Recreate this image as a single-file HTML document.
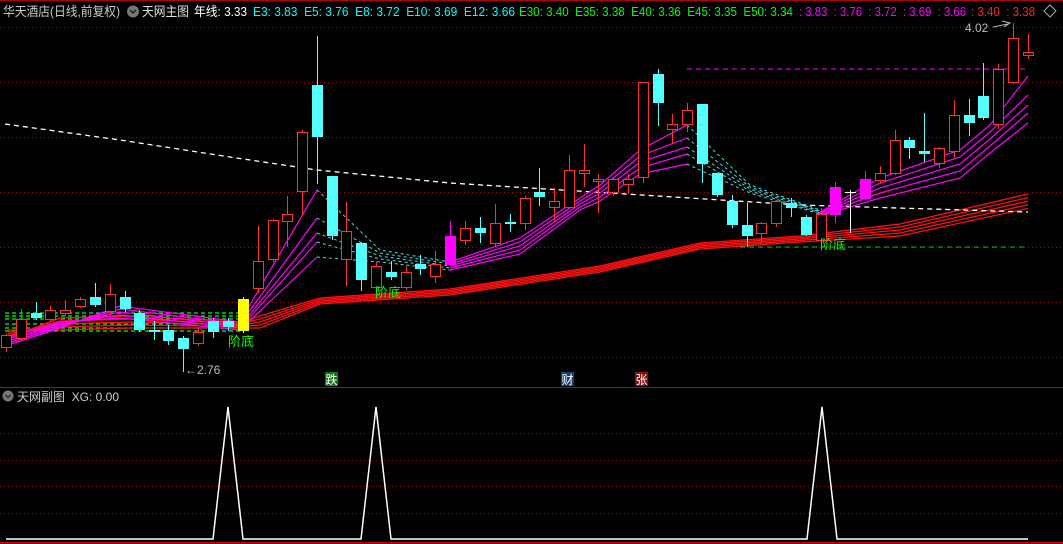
<!DOCTYPE html>
<html><head><meta charset="utf-8"><style>
html,body{margin:0;padding:0;background:#000;width:1063px;height:544px;overflow:hidden}
svg{display:block}
text{font-family:"Liberation Sans","Noto Sans CJK SC",sans-serif}
</style></head><body>
<svg id="s" width="1063" height="544" xmlns="http://www.w3.org/2000/svg">
<rect width="1063" height="544" fill="#000"/>
<g id="grid" stroke="#8a1010" stroke-width="1" stroke-dasharray="1,3"></g>
<line x1="0" y1="0.5" x2="1063" y2="0.5" stroke="#a00" />
<line x1="0" y1="387.5" x2="1063" y2="387.5" stroke="#c00" />
<line x1="0" y1="542.5" x2="1063" y2="542.5" stroke="#c00" />
<g id="lines"></g>
<g id="candles"></g>
<!-- header -->
<text x="3" y="16" font-size="13" fill="#c8c8c8" textLength="117" lengthAdjust="spacingAndGlyphs">华天酒店(日线,前复权)</text>
<circle cx="133" cy="11.5" r="6" fill="#777"/>
<path d="M130 10 L133 13 L136 10" stroke="#222" stroke-width="1.5" fill="none"/>
<text x="142" y="16" font-size="13" fill="#e0e0e0" textLength="47" lengthAdjust="spacingAndGlyphs">天网主图</text>
<text x="194" y="16" font-size="13" fill="#fff" textLength="53" lengthAdjust="spacingAndGlyphs">年线: 3.33</text>
<text x="253" y="16" font-size="12.5" fill="#00ffff" textLength="262" lengthAdjust="spacingAndGlyphs" xml:space="preserve">E3: 3.83  E5: 3.76  E8: 3.72  E10: 3.69  E12: 3.66</text>
<text x="519" y="16" font-size="12.5" fill="#00ff00" textLength="274" lengthAdjust="spacingAndGlyphs" xml:space="preserve">E30: 3.40  E35: 3.38  E40: 3.36  E45: 3.35  E50: 3.34</text>
<text x="799" y="16" font-size="12.5" fill="#ff00ff" textLength="167" lengthAdjust="spacingAndGlyphs" xml:space="preserve">: 3.83  : 3.76  : 3.72  : 3.69  : 3.66</text>
<text x="971" y="16" font-size="12.5" fill="#ff2020" textLength="64" lengthAdjust="spacingAndGlyphs" xml:space="preserve">: 3.40  : 3.38</text>
<path d="M1050 5 L1056 11 L1050 17 L1044 11 Z" stroke="#aaa" fill="none"/>
<!-- labels -->
<text x="228" y="346" font-size="13" fill="#00ff00">阶底</text>
<text x="375" y="297" font-size="13" fill="#00ff00">阶底</text>
<text x="820" y="249" font-size="13" fill="#00ff00">阶底</text>
<text x="185" y="374" font-size="12" fill="#bbb">←2.76</text>
<text x="965" y="32" font-size="12" fill="#bbb">4.02</text>
<path d="M993 27 L1008 24 M1002 21 L1010 23 L1004 27" stroke="#bbb" fill="none"/>
<rect x="325" y="372" width="13" height="14" fill="#087a10"/>
<text x="325.5" y="384" font-size="12" fill="#fff">跌</text>
<rect x="561" y="372" width="13" height="14" fill="#14407a"/>
<text x="561.5" y="384" font-size="12" fill="#fff">财</text>
<rect x="635" y="372" width="13" height="14" fill="#8a1010"/>
<text x="635.5" y="384" font-size="12" fill="#fff">张</text>
<!-- sub chart -->
<circle cx="8" cy="396" r="5.5" fill="#777"/>
<path d="M5.5 395 L8 397.5 L10.5 395" stroke="#222" stroke-width="1.3" fill="none"/>
<text x="17" y="401" font-size="12" fill="#ccc" xml:space="preserve">天网副图  XG: 0.00</text>
<polyline fill="none" stroke="#fff" stroke-width="1.5" points="6,539 213,539 228,407 243,539 361,539 376,407 391,539 807,539 822,407 837,539 1028,539"/>
</svg>
<script>
var NS="http://www.w3.org/2000/svg";
function el(p,t,a){var e=document.createElementNS(NS,t);for(var k in a)e.setAttribute(k,a[k]);p.appendChild(e);return e;}
var g=document.getElementById('grid');
[27,82,137,192,247,302,357,433,460,486,513].forEach(function(y){el(g,'line',{x1:0,y1:y+.5,x2:1063,y2:y+.5});});
var L=document.getElementById('lines');
function pl(pts,c,w,d){var a={points:pts.map(function(p){return p.join(',')}).join(' '),fill:'none',stroke:c,'stroke-width':w||1};if(d)a['stroke-dasharray']=d;el(L,'polyline',a);}
[313,316,319,324,328,331].forEach(function(y){pl([[5,y],[240,y]],'#00ff00',1.2,'4,3');});
for(var k=0;k<5;k++){var o=k*3;
pl([[8,338-k*2],[60,318+o],[130,316+o],[240,322+o/2],[260,316+o],[320,298+o/2],[450,289+o/2],[600,266+o/2],[700,243+o/2],[800,236+o/2],[900,224+o],[1028,194+o*1.2]],'#ff1010',1.3);}
pl([[5,124],[120,140],[230,157],[317,170],[450,183],[610,193],[800,205],[1028,212]],'#fff',1.3,'5,4');
pl([[687,69],[1028,69]],'#ff00ff',1,'5,4');
pl([[740,247],[1028,247]],'#00cc00',1,'5,4');
var tops=[[190,218,233,242,257],[125,138,147,154,164],[76,95,105,113,123]];
for(var k=0;k<5;k++){
 pl([[5,346-k*2],[60,328-k*1.5],[120,306+k*3],[240,322+k*2],[317,tops[0][k]]],'#ff00ff',1.2);
 pl([[317,tops[0][k]],[380,250+k*3],[450,262+k*2]],'#40e0e0',1,'3,3');
 pl([[450,262+k*2],[520,238+k*4],[580,198+k*3],[600,185+k*4],[640,150+k*6],[687,tops[1][k]]],'#ff00ff',1.2);
 pl([[687,tops[1][k]],[750,185+k*2],[820,210+k]],'#40e0e0',1,'3,3');
 pl([[820,212+k],[880,178+k*5],[960,150+k*7],[990,125+k*7],[1028,tops[2][k]]],'#ff00ff',1.2);
}
var C=[[6,333,335,347,352,'r'],[21,309,319,338,340,'r'],[36,302,313,318,320,'c'],[50,306,310,319,322,'r'],[65,300,310,313,316,'r'],[80,297,299,306,308,'r'],[95,283,297,305,307,'c'],[110,284,294,311,315,'r'],[125,291,297,309,312,'c'],[139,310,313,330,332,'c'],[154,321,330,332,340,'c'],[168,325,330,341,345,'c'],[183,336,338,349,372,'c'],[198,327,332,343,346,'r'],[213,318,321,332,338,'c'],[228,318,321,327,331,'c'],[243,297,299,331,333,'y'],
[258,226,261,288,293,'r'],[273,219,220,259,262,'r'],[287,196,214,221,247,'r'],[302,130,132,191,215,'r'],[317,36,85,137,184,'c'],[332,176,176,236,240,'c'],[346,202,231,259,286,'r'],[361,242,243,280,291,'c'],[376,262,266,287,292,'r'],[391,261,272,277,280,'c'],[406,265,272,287,290,'r'],[420,255,264,269,275,'c'],[435,251,264,276,283,'r'],[450,221,236,265,266,'m'],[465,221,228,240,245,'r'],[480,217,228,233,243,'c'],[495,204,223,243,246,'r'],[510,214,222,224,232,'c'],[525,196,198,223,230,'r'],[539,168,192,197,206,'c'],[554,188,201,207,222,'r'],[569,155,170,207,209,'r'],[584,144,170,173,187,'r'],[598,174,179,181,213,'r'],[613,177,179,192,196,'r'],[628,174,179,184,194,'r'],[643,82,82,177,183,'r'],[658,69,74,103,126,'c'],[672,114,124,129,143,'r'],[687,103,110,124,132,'r'],[702,104,104,164,183,'c'],[717,173,173,195,197,'c'],[732,195,201,225,228,'c'],[747,203,225,236,247,'c'],[761,222,223,233,243,'r'],[776,200,201,223,227,'r'],[791,198,203,208,217,'c'],[806,215,217,235,236,'c'],[821,208,214,240,242,'r'],[835,182,187,215,223,'m'],[850,190,192,193,233,'w'],[865,171,179,199,200,'m'],[880,166,173,180,184,'r'],[895,130,140,173,175,'r'],[909,137,140,148,159,'c'],[924,113,151,154,162,'c'],[939,147,148,163,168,'r'],[954,100,115,151,157,'r'],[969,99,115,123,136,'c'],[983,63,96,118,120,'c'],[998,64,69,124,129,'r'],[1013,23,38,82,84,'r'],[1028,34,52,55,59,'r']];
var G=document.getElementById('candles');
var col={r:'#ff3030',c:'#54ffff',m:'#ff00ff',y:'#ffff00',w:'#ffffff'};
C.forEach(function(d){var x=d[0],c=col[d[5]];
 if(d[5]=='w'){el(G,'line',{x1:x+.5,y1:d[1],x2:x+.5,y2:d[4],stroke:c});el(G,'line',{x1:x-5,y1:d[2]+.5,x2:x+6,y2:d[2]+.5,stroke:c});return;}
 el(G,'line',{x1:x+.5,y1:d[1],x2:x+.5,y2:d[2],stroke:c});
 el(G,'line',{x1:x+.5,y1:d[3],x2:x+.5,y2:d[4],stroke:c});
 var h=Math.max(d[3]-d[2],1);
 if(d[5]=='r') el(G,'rect',{x:x-4.5,y:d[2]+.5,width:10,height:h,fill:'#000',stroke:c});
 else el(G,'rect',{x:x-5,y:d[2],width:11,height:Math.max(h,2),fill:c});
});
</script>
</body></html>
